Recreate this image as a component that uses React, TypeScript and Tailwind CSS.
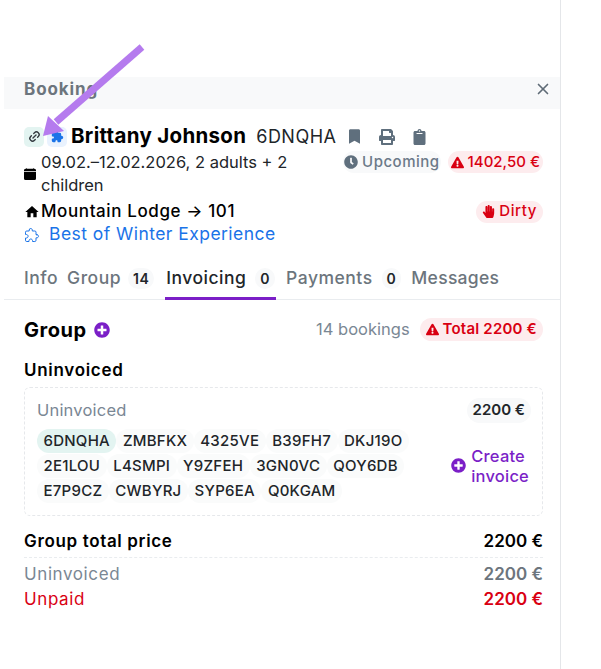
import { X, Link2 } from 'lucide-react';
import { BsCalendarFill } from 'react-icons/bs';
import {
  FaBookmark,
  FaClipboard,
  FaClock,
  FaExclamationTriangle,
  FaHandPaper,
  FaPlusCircle,
  FaPrint,
} from 'react-icons/fa';
import { IoExtensionPuzzle, IoExtensionPuzzleOutline } from 'react-icons/io5';
import { MdHome } from 'react-icons/md';

const codes = [
  ['6DNQHA', 'ZMBFKX', '4325VE', 'B39FH7', 'DKJ19O'],
  ['2E1LOU', 'L4SMPI', 'Y9ZFEH', '3GN0VC', 'QOY6DB'],
  ['E7P9CZ', 'CWBYRJ', 'SYP6EA', 'Q0KGAM'],
];

export default function App() {
  return (
    <div className="relative h-[669px] overflow-hidden bg-white font-['Inter',sans-serif] text-black">
      {/* annotation arrow */}
      <svg className="absolute left-[40px] top-[40px] z-10" width="110" height="100" viewBox="0 0 110 100">
        <path d="M102 7 L16 82" stroke="#b57bee" strokeWidth="7" fill="none" />
        <path d="M3 96 L8 76 L24 91 Z" fill="#b57bee" />
      </svg>

      <div className="ml-[4px] flex h-full w-[557px] flex-col border-r border-[#e4e6e9] pt-[77px]">
        {/* Header */}
        <div className="flex h-[32px] shrink-0 items-start justify-between bg-[#f8f9fa] pl-[20px] pr-[8px] pt-[1px]">
          <span className="text-[17px] font-bold leading-[22px] tracking-[0.9px] text-[#6c757d]">Booking</span>
          <X className="mt-[2px] h-[18px] w-[18px] text-[#5f6b76]" strokeWidth={2.2} />
        </div>

        {/* Booking summary */}
        <div className="pl-[20px] pr-[17px] pt-[16px]">
          <div className="flex h-[23px] items-center">
            <span className="flex h-[20px] w-[20px] items-center justify-center rounded-[5px] bg-[#e3f4f1]">
              <Link2 className="h-[13px] w-[13px] -rotate-45 text-[#343a40]" strokeWidth={2.5} />
            </span>
            <span className="ml-[3px] flex h-[20px] w-[20px] items-center justify-center rounded-[5px] bg-[#e9f2fe]">
              <IoExtensionPuzzle className="h-[13px] w-[13px] text-[#1a73e8]" />
            </span>
            <span className="ml-[4px] text-[20.5px] font-bold tracking-[0.3px]">Brittany Johnson</span>
            <span className="ml-[10px] text-[18px] tracking-[0.5px] text-[#212529]">6DNQHA</span>
            <FaBookmark className="ml-[12px] h-[15px] w-[11px] text-[#5f6f7d]" />
            <FaPrint className="ml-[19px] h-[16px] w-[16px] text-[#5f6f7d]" />
            <FaClipboard className="ml-[18px] h-[16px] w-[13px] text-[#5f6f7d]" />
          </div>

          <div className="mt-[3px] flex items-start justify-between">
            <div className="flex w-[300px] items-center">
              <BsCalendarFill className="-mt-[1px] h-[12px] w-[12px] shrink-0 text-black" />
              <span className="ml-[5px] text-[16.5px] leading-[23px] text-[#212529]">
                09.02.–12.02.2026, 2 adults + 2 children
              </span>
            </div>
            <div className="flex items-center">
              <span className="flex h-[22px] items-center gap-[4px] rounded-full bg-[#f8f9fa] px-[1px] text-[15px] font-medium tracking-[0.5px] text-[#6c7a89]">
                <FaClock className="h-[14px] w-[14px] text-[#5f6f7d]" />
                Upcoming
              </span>
              <span className="ml-[7px] flex h-[22px] items-center gap-[4px] rounded-full bg-[#fdecee] px-[3px] text-[15px] font-medium text-[#d90012]">
                <FaExclamationTriangle className="h-[13px] w-[13px]" />
                1402,50 €
              </span>
            </div>
          </div>

          <div className="mt-[3px] flex items-center justify-between">
            <div className="flex items-center">
              <MdHome className="h-[16px] w-[16px]" />
              <span className="ml-[1px] text-[17px] font-medium leading-[23px] tracking-[0.6px]">Mountain Lodge → 101</span>
            </div>
            <span className="flex h-[22px] items-center gap-[4px] rounded-full bg-[#fdecee] px-[6px] text-[15px] font-medium tracking-[0.6px] text-[#d90012]">
              <FaHandPaper className="h-[13px] w-[13px]" />
              Dirty
            </span>
          </div>

          <div className="flex h-[23px] items-center text-[#1a73e8]">
            <IoExtensionPuzzleOutline className="h-[16px] w-[16px]" />
            <span className="ml-[9px] text-[17.5px] tracking-[0.45px]">Best of Winter Experience</span>
          </div>
        </div>

        {/* Tabs */}
        <div className="mt-[11px] flex h-[43px] shrink-0 items-start border-b border-[#e9ecef] px-[20px] pt-[8px] text-[17.5px] font-medium tracking-[0.5px] text-[#6c757d]">
          <span>Info</span>
          <span className="ml-[9px] flex items-center gap-[7px]">
            Group
            <span className="rounded-full bg-[#f8f9fa] px-[5px] text-[14px] font-semibold text-[#212529]">14</span>
          </span>
          <span className="relative ml-[11px] flex h-[35px] items-start gap-[9px] pl-[1px] pr-[1px] text-[#212529] after:absolute after:inset-x-0 after:bottom-0 after:h-[3px] after:bg-[#7b1fc7] after:content-['']">
            Invoicing
            <span className="mt-[3px] rounded-full bg-[#f8f9fa] px-[5px] text-[14px] font-semibold">0</span>
          </span>
          <span className="ml-[10px] flex items-center gap-[9px]">
            Payments
            <span className="rounded-full bg-[#f8f9fa] px-[5px] text-[14px] font-semibold text-[#212529]">0</span>
          </span>
          <span className="ml-[10px] tracking-[0.3px]">Messages</span>
        </div>

        {/* Invoicing */}
        <div className="pl-[20px] pr-[17px]">
          <div className="mt-[16px] flex h-[27px] items-center justify-between">
            <div className="flex items-center">
              <span className="text-[20px] font-bold tracking-[0.5px]">Group</span>
              <FaPlusCircle className="ml-[7px] h-[16px] w-[16px] text-[#7b1fc7]" />
            </div>
            <div className="flex items-center">
              <span className="text-[16.5px] text-[#7a8794]">14 bookings</span>
              <span className="ml-[10px] flex h-[23px] items-center gap-[4px] rounded-full bg-[#fdecee] px-[6px] text-[15px] font-semibold tracking-[0.2px] text-[#d90012]">
                <FaExclamationTriangle className="h-[13px] w-[13px]" />
                Total 2200 €
              </span>
            </div>
          </div>

          <div className="mt-[16px] text-[17px] font-semibold leading-[22px] tracking-[0.7px]">Uninvoiced</div>

          <div className="mt-[6px] h-[129px] rounded-[6px] border border-dashed border-[#e6e8eb] pl-[12px] pr-[11px] pt-[10px]">
            <div className="flex items-center justify-between">
              <span className="text-[16.5px] tracking-[0.2px] text-[#7a8794]">Uninvoiced</span>
              <span className="rounded-full bg-[#f8f9fa] px-[6px] py-[1px] text-[15px] font-semibold text-[#212529]">2200 €</span>
            </div>
            <div className="mt-[6px] flex items-center justify-between">
              <div className="flex flex-col gap-[1px]">
                {codes.map((row, r) => (
                  <div key={r} className="flex">
                    {row.map((code, i) => (
                      <span
                        key={code}
                        className={`flex h-[24px] items-center rounded-full px-[6.5px] text-[15px] font-medium tracking-[0.25px] text-[#212529] ${
                          r === 0 && i === 0 ? 'bg-[#e3f4f1]' : 'bg-[#fafbfb]'
                        }`}
                      >
                        {code}
                      </span>
                    ))}
                  </div>
                ))}
              </div>
              <div className="flex items-center gap-[5px] pr-[2px] text-[16.5px] font-medium leading-[20px] tracking-[0.2px] text-[#7b1fc7]">
                <FaPlusCircle className="h-[15px] w-[15px]" />
                <span>
                  Create
                  <br />
                  invoice
                </span>
              </div>
            </div>
          </div>

          <div className="mt-[11px] flex h-[31px] items-center justify-between border-b border-dashed border-[#e9ecef] text-[17px] font-semibold">
            <span className="tracking-[0.65px]">Group total price</span>
            <span>2200 €</span>
          </div>
          <div className="mt-[5px] flex h-[24px] items-center justify-between text-[17px] text-[#7a8794]">
            <span className="tracking-[0.6px]">Uninvoiced</span>
            <span className="font-semibold text-[#6c757d]">2200 €</span>
          </div>
          <div className="flex h-[25px] items-center justify-between text-[17px] text-[#d90012]">
            <span className="tracking-[0.6px]">Unpaid</span>
            <span className="font-semibold">2200 €</span>
          </div>
        </div>
      </div>
    </div>
  );
}
